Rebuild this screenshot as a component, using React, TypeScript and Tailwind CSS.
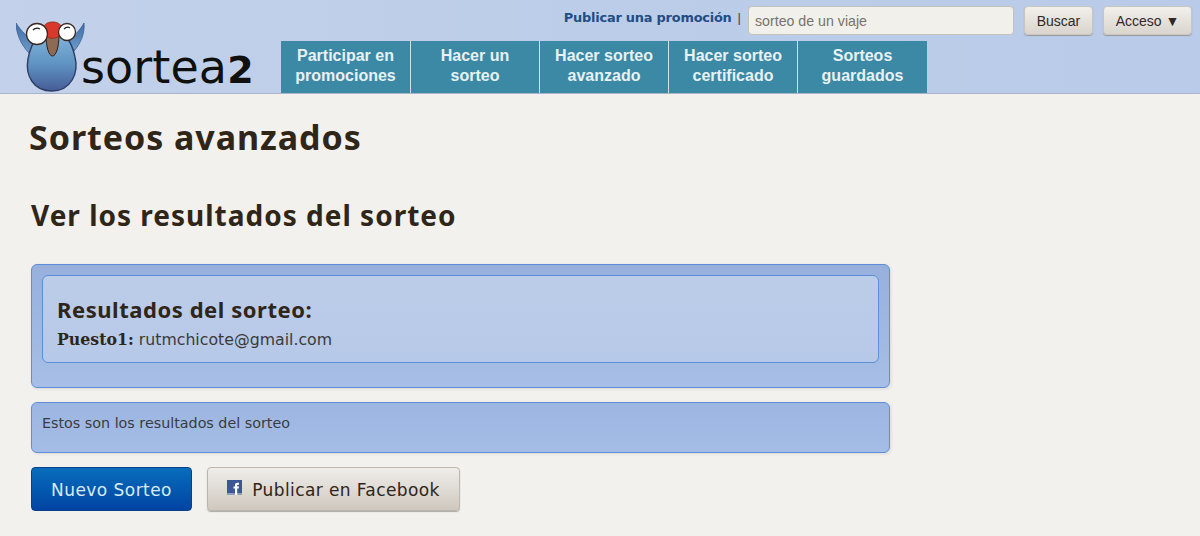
const navItems = [
  ["Participar en", "promociones"],
  ["Hacer un", "sorteo"],
  ["Hacer sorteo", "avanzado"],
  ["Hacer sorteo", "certificado"],
  ["Sorteos", "guardados"],
];

function Mascot() {
  return (
    <svg width="70" height="71" viewBox="0 0 70 71" className="shrink-0">
      <defs>
        <linearGradient id="body" x1="0" y1="0" x2="0" y2="1">
          <stop offset="0" stopColor="#86b8dc" />
          <stop offset="0.55" stopColor="#5f93c2" />
          <stop offset="1" stopColor="#465c98" />
        </linearGradient>
        <linearGradient id="wing" x1="0" y1="0" x2="0" y2="1">
          <stop offset="0" stopColor="#3f6da6" />
          <stop offset="1" stopColor="#6d9ccb" />
        </linearGradient>
      </defs>
      <path d="M0 2 C0 12 5 24 13 32 L20 20 C12 17 5 10 0 2Z" fill="url(#wing)" stroke="#3b5f8f" strokeWidth="0.8" />
      <path d="M68 2 C69 12 65 22 58 30 L52 18 C59 15 64 9 68 2Z" fill="url(#wing)" stroke="#3b5f8f" strokeWidth="0.8" />
      <path d="M36 10 C50 10 56 22 59 36 C63 52 55 70 36 70 C17 70 9 54 12 38 C15 22 22 10 36 10Z" fill="url(#body)" stroke="#2e3d66" strokeWidth="1.4" />
      <path d="M30 14 L43 14 C43 26 40 35 36.500 35 C33 35 30 26 30 14Z" fill="#8f6a52" stroke="#2c1f1a" strokeWidth="1" />
      <path d="M28 6 C29 2 33 1 37 1 C41 1 45 3 46 7 L43 15 C40 18 33 18 30 15Z" fill="#d8392a" stroke="#8a2a1a" strokeWidth="0.8" />
      <circle cx="21" cy="13" r="10.500" fill="#fff" stroke="#3a2a22" strokeWidth="1.3" />
      <circle cx="51" cy="11" r="8.500" fill="#fff" stroke="#3a2a22" strokeWidth="1.3" />
      <path d="M17 9 Q20 6 24 8" fill="none" stroke="#222" strokeWidth="1.2" />
      <path d="M48 8 Q51 5 54 7" fill="none" stroke="#222" strokeWidth="1.2" />
    </svg>
  );
}

function FacebookIcon() {
  return (
    <svg width="15" height="15" viewBox="0 0 15 15" className="-mt-1 shrink-0">
      <rect width="15" height="15" fill="#3b5795" />
      <rect y="13" width="15" height="2" fill="#8d9cc0" />
      <path d="M8 15V8.500H6.500V6.500H8V5.200C8 3.500 9 2.800 10.300 2.800H12V4.800H11C10.400 4.800 10.200 5.100 10.200 5.600V6.500H12L11.700 8.500H10.200V15Z" fill="#fff" />
    </svg>
  );
}

export default function App() {
  return (
    <div className="h-[536px] overflow-hidden bg-[#f2f1ed] font-['DejaVu_Sans',sans-serif] text-[#2f2519]">
      <header className="flex h-[94px] border-b border-[#a9b5cb] bg-gradient-to-r from-[#c3d1ea] via-[#bccde9] to-[#b9cbe8]">
        <div className="flex w-[281px] shrink-0 items-end pb-px pl-4">
          <Mascot />
          <span className="-ml-[5px] text-[46px] leading-[44px] tracking-[0.1px] text-[#10100e]">
            sortea<span className="text-[38px] font-bold">2</span>
          </span>
        </div>
        <div className="flex min-w-0 flex-1 flex-col">
          <div className="flex h-[41px] items-start justify-end pt-[6px] pr-2 font-['Liberation_Sans',sans-serif]">
            <a className="mt-[2px] font-['DejaVu_Sans',sans-serif] text-[12.9px] font-bold tracking-[-0.2px] text-[#1f4d86]">
              Publicar una promoción
            </a>
            <span className="mt-[2px] ml-[6px] text-[13px] text-[#444]">|</span>
            <input
              readOnly
              value="sorteo de un viaje"
              className="ml-[7px] h-[29px] w-[266px] rounded-[4px] border border-[#c5c2bc] bg-[#f2f0ea] px-[6px] text-[14.2px] text-[#77736b]"
            />
            <button className="ml-[10px] h-[29px] w-[69px] rounded-[4px] border border-[#c9c6c0] bg-gradient-to-b from-[#f2f0ec] to-[#d9d4cd] pt-px text-[14px] text-[#2f2a25] shadow-[0_1px_1px_#9a9a9a]">
              Buscar
            </button>
            <button className="ml-[10px] h-[29px] w-[89px] rounded-[4px] border border-[#c9c6c0] bg-gradient-to-b from-[#f2f0ec] to-[#d9d4cd] pt-px text-[14px] text-[#2f2a25] shadow-[0_1px_1px_#9a9a9a]">
              Acceso ▼
            </button>
          </div>
          <nav className="flex h-[52px] font-['Liberation_Sans',sans-serif]">
            {navItems.map(([a, b], i) => (
              <a
                key={i}
                className="flex w-[129px] flex-col items-center justify-center border-r border-[#cfe0e8] bg-[#3b89a5] pb-[2px] text-center text-[16px] leading-[20px] font-bold text-[#e8f1f4] first:w-[130px] last:border-r-0"
              >
                <span>{a}</span>
                <span>{b}</span>
              </a>
            ))}
          </nav>
        </div>
      </header>

      <main className="pl-[31px]">
        <h1 className="mt-[21px] -ml-[2px] font-['Noto_Sans',sans-serif] text-[34px] leading-[44px] font-bold tracking-[0.95px]">
          Sorteos avanzados
        </h1>
        <h2 className="mt-[38px] font-['Noto_Sans',sans-serif] text-[28px] leading-[36px] font-bold tracking-[1px]">
          Ver los resultados del sorteo
        </h2>

        <section className="mt-[31px] h-[124px] w-[859px] rounded-[6px] border border-[#5f8ed8] bg-gradient-to-b from-[#97b0dc] to-[#a7bfe6] p-[10px] shadow-[1px_1px_3px_#d9d8d4]">
          <div className="h-[88px] rounded-[6px] border border-[#5f8ed8] bg-gradient-to-b from-[#bccde9] to-[#b7c9e8] px-[14px] pt-[19px]">
            <h3 className="font-['Noto_Sans',sans-serif] text-[22px] leading-[28px] font-bold tracking-[0.55px]">Resultados del sorteo:</h3>
            <p className="mt-[7px] text-[15.750px] leading-[20px] text-[#3b3a3a]">
              <b className="font-['DejaVu_Serif',serif] text-[#2f2519]">Puesto1:</b> rutmchicote@gmail.com
            </p>
          </div>
        </section>

        <p className="mt-[14px] h-[51px] w-[859px] rounded-[6px] border border-[#5f8ed8] bg-gradient-to-b from-[#9cb6e2] to-[#a4bde6] px-[10px] pt-[10px] text-[14.300px] leading-[20px] text-[#3a3b40] shadow-[1px_1px_3px_#d9d8d4]">
          Estos son los resultados del sorteo
        </p>

        <div className="mt-[14px] flex gap-[15px]">
          <button className="h-[44px] w-[161px] rounded-[4px] border border-[#0b3f86] bg-gradient-to-b from-[#0a6dbb] to-[#0343a3] pt-[3px] text-[17px] tracking-[0.45px] text-[#d8ecf8]">
            Nuevo Sorteo
          </button>
          <button className="flex h-[44px] w-[253px] items-center justify-center gap-[10px] rounded-[4px] border border-[#bdb6ac] bg-gradient-to-b from-[#efedea] to-[#cfc8bf] text-[17px] tracking-[0.4px] text-[#2f2519] shadow-[0_1px_1px_#aaa]">
            <FacebookIcon />
            <span className="pt-[3px]">Publicar en Facebook</span>
          </button>
        </div>
      </main>
    </div>
  );
}
